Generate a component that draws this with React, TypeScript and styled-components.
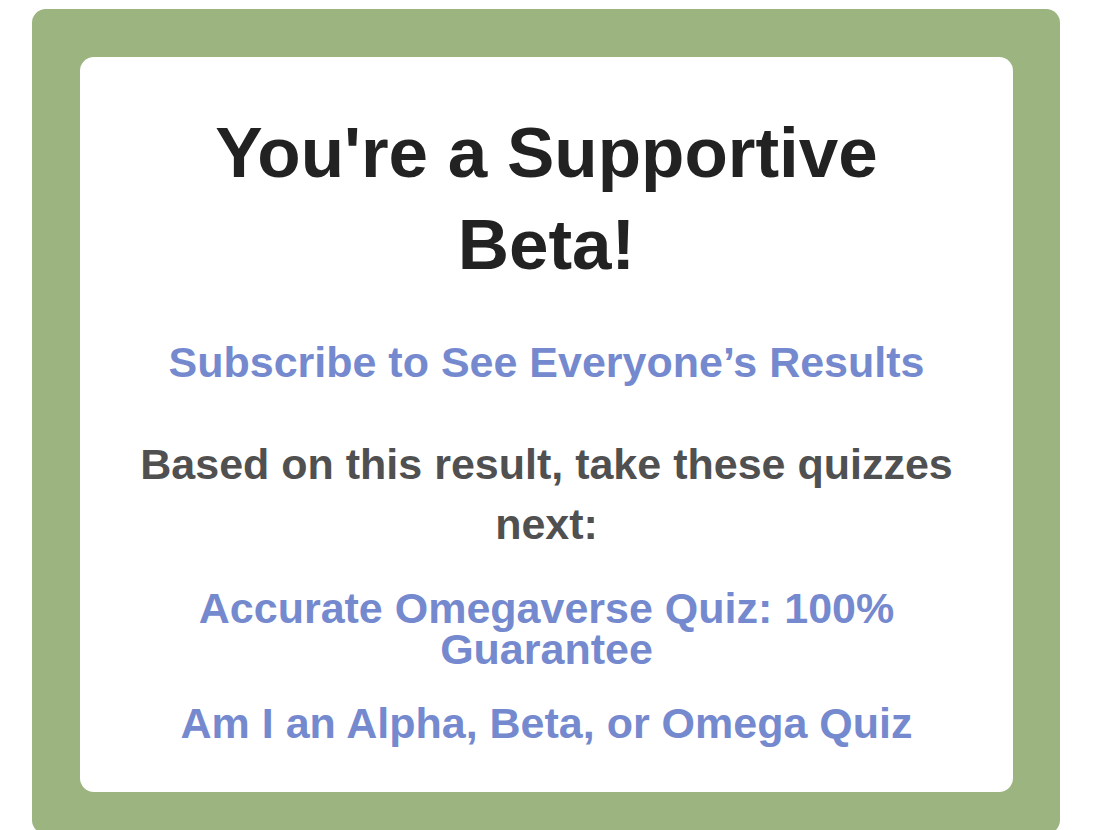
import React from "react";
import styled, { createGlobalStyle } from "styled-components";

const GlobalStyle = createGlobalStyle`
  html, body {
    margin: 0;
    padding: 0;
    background: #ffffff;
    overflow: hidden;
  }
  body {
    font-family: "Liberation Sans", Arial, Helvetica, sans-serif;
  }
`;

const Page = styled.div`
  padding: 9px 49px 0 32px;
  height: 830px;
  box-sizing: border-box;
`;

const GreenCard = styled.section`
  background: #9bb480;
  border-radius: 14px;
  padding: 48px 47px 42px 48px;
`;

const WhiteCard = styled.div`
  background: #ffffff;
  border-radius: 14px;
  padding: 50px 40px 48px;
  display: flex;
  flex-direction: column;
  align-items: center;
  text-align: center;
`;

const Title = styled.h1`
  margin: 0;
  font-size: 71px;
  line-height: 92px;
  font-weight: 700;
  color: #222222;
  max-width: 720px;
`;

const Link = styled.a<{ $lh?: number; $mt: number }>`
  display: block;
  margin-top: ${(p) => p.$mt}px;
  font-size: 43px;
  line-height: ${(p) => p.$lh ?? 60}px;
  font-weight: 700;
  color: #7589cf;
  text-decoration: none;
`;

const Body = styled.p`
  margin: 42px 0 0;
  font-size: 43px;
  line-height: 60px;
  font-weight: 700;
  color: #505050;
`;

export default function App() {
  return (
    <>
      <GlobalStyle />
      <Page>
        <GreenCard>
          <WhiteCard>
            <Title>You're a Supportive Beta!</Title>
            <Link href="#" $mt={41}>
              Subscribe to See Everyone’s Results
            </Link>
            <Body>Based on this result, take these quizzes next:</Body>
            <Link href="#" $mt={34} $lh={41}>
              Accurate Omegaverse Quiz: 100% Guarantee
            </Link>
            <Link href="#" $mt={33} $lh={41}>
              Am I an Alpha, Beta, or Omega Quiz
            </Link>
          </WhiteCard>
        </GreenCard>
      </Page>
    </>
  );
}
